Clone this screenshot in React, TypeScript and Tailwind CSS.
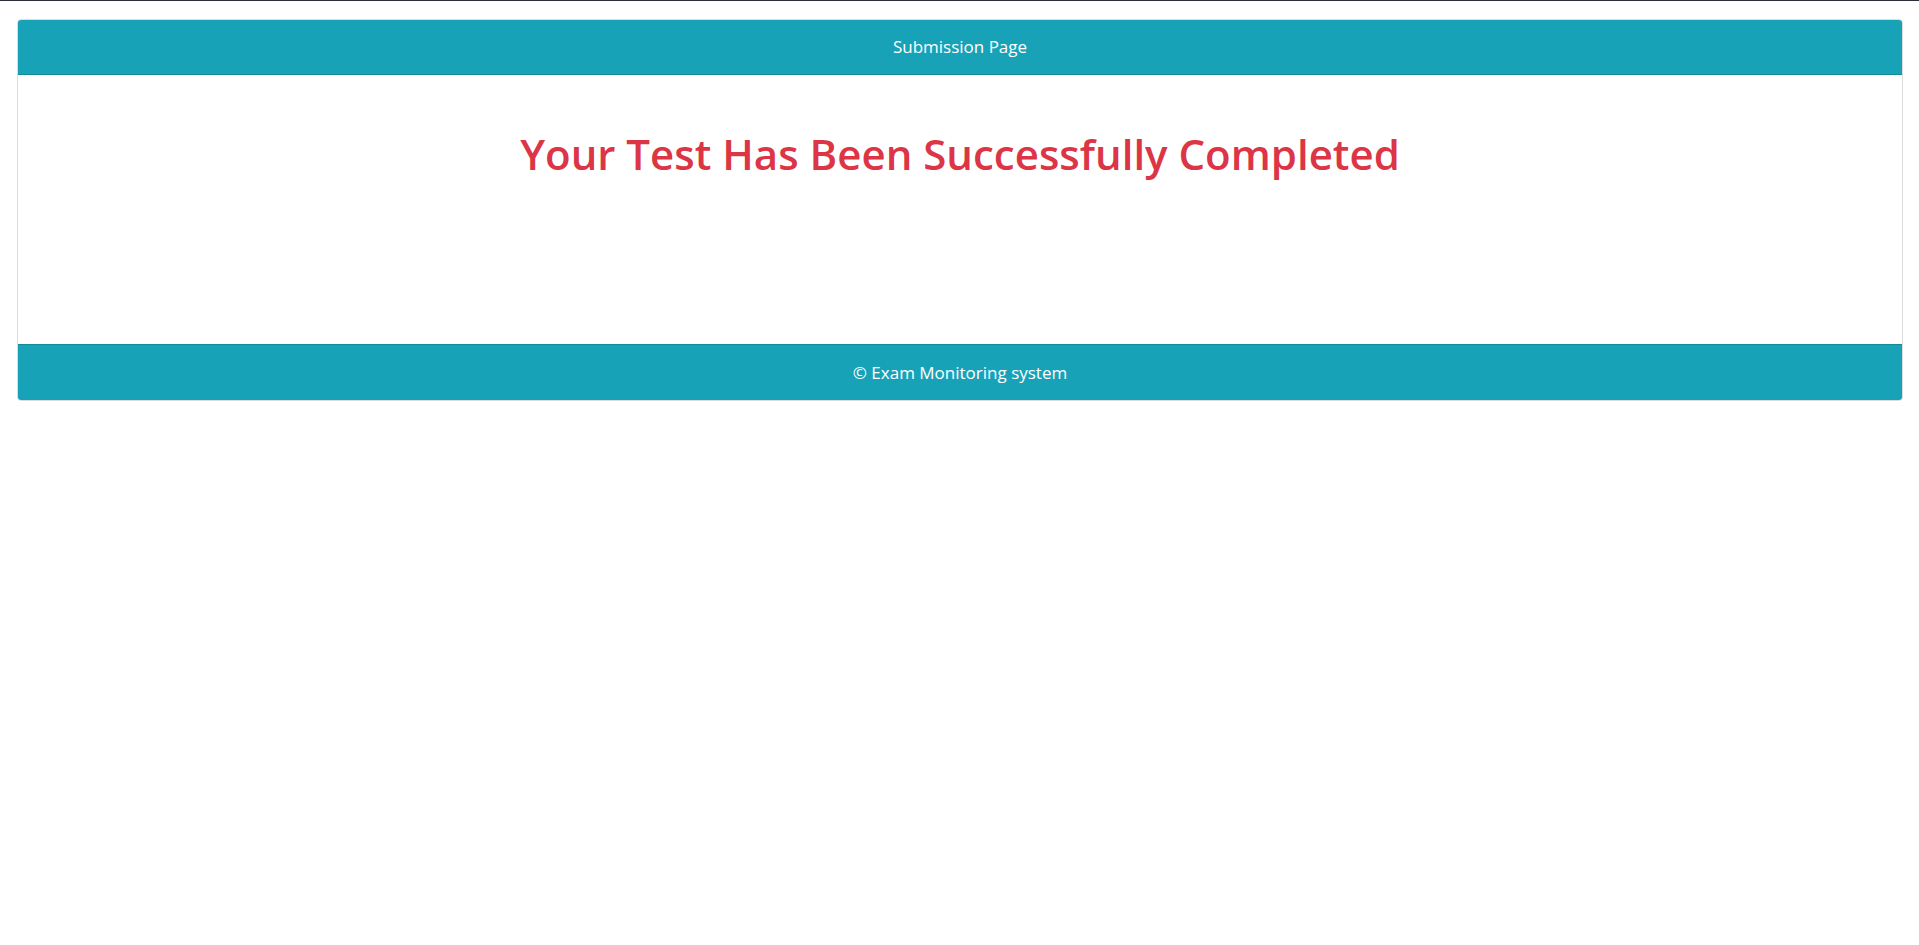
import React from 'react';

const App: React.FC = () => {
  return (
    <div className="min-h-[945px] bg-white font-['Open_Sans',sans-serif]">
      {/* top edge line */}
      <div className="h-px bg-[#2b2f38]" />

      <div className="pl-[17px] pr-[16px] pt-[18px]">
        <div className="border border-[#dcdcdc] rounded-[4px] overflow-hidden">
          {/* Header */}
          <div className="bg-[#18a2b8] border-b border-[#15899c] h-[55px] flex items-center justify-center">
            <span className="text-white text-[17px]">Submission Page</span>
          </div>

          {/* Body */}
          <div className="h-[269px] pt-[55px] text-center">
            <h1 className="text-[#dc3545] text-[42px] leading-[48px] font-semibold">
              Your Test Has Been Successfully Completed
            </h1>
          </div>

          {/* Footer */}
          <div className="bg-[#18a2b8] border-t border-[#15899c] h-[56px] flex items-center justify-center">
            <span className="text-white text-[17px]">© Exam Monitoring system</span>
          </div>
        </div>
      </div>
    </div>
  );
};

export default App;
